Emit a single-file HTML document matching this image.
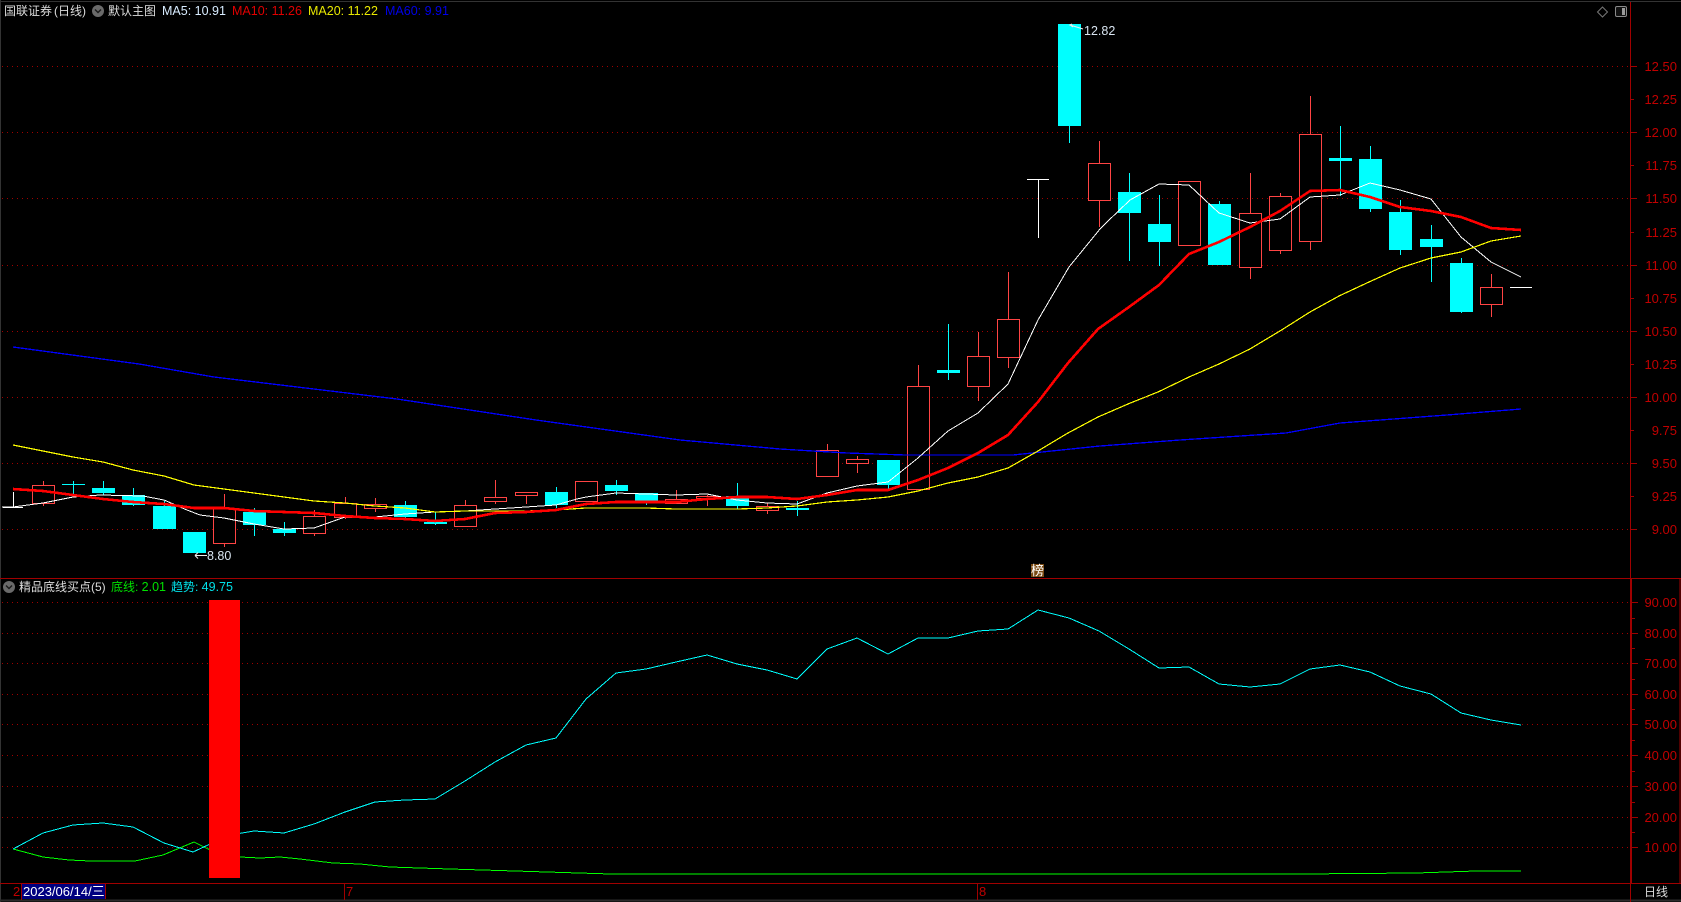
<!DOCTYPE html>
<html lang="zh">
<head>
<meta charset="utf-8">
<title>国联证券 (日线)</title>
<style>
html,body{margin:0;padding:0;background:#000;width:1681px;height:902px;overflow:hidden}
svg{display:block}
text{font-family:"Liberation Sans","Noto Sans CJK SC",sans-serif;font-size:12px}
.ax text{fill:#c00000;text-anchor:end;font-size:13px}
.n{font-size:12.5px}
.d{font-size:13px}
.l{fill:none;shape-rendering:crispEdges}
</style>
</head>
<body>
<svg width="1681" height="902" viewBox="0 0 1681 902" xmlns="http://www.w3.org/2000/svg">
<rect width="1681" height="902" fill="#000"/>
<!-- outer frame -->
<path class="l" d="M0 1.5H1681M.5 0V902" stroke="#333" stroke-width="1"/>
<path class="l" d="M0 900.5H1681" stroke="#2c2c2c" stroke-width="2"/>
<!-- grid -->
<path class="l" stroke="#a00000" stroke-dasharray="1 4" d="M2 66.5H1630M2 132.5H1630M2 198.5H1630M2 265.5H1630M2 331.5H1630M2 397.5H1630M2 463.5H1630M2 529.5H1630M2 602.5H1630M2 633.5H1630M2 663.5H1630M2 694.5H1630M2 724.5H1630M2 755.5H1630M2 786.5H1630M2 817.5H1630M2 847.5H1630"/>
<!-- frame lines -->
<path class="l" stroke="#a00000" d="M1630.5 2V902M0 578.5H1681M0 883.5H1630M1631.5 579V883M1680 579V883M1631 883.5H1681M344.5 883V900M977.5 883V900M21.5 883V900"/>
<!-- ticks -->
<path class="l" stroke="#a00000" d="M1631 66.5h6M1631 99.5h3M1631 132.5h6M1631 165.5h3M1631 198.5h6M1631 232.5h3M1631 265.5h6M1631 298.5h3M1631 331.5h6M1631 364.5h3M1631 397.5h6M1631 430.5h3M1631 463.5h6M1631 496.5h3M1631 529.5h6M1632 602.5h6M1632 633.5h6M1632 663.5h6M1632 694.5h6M1632 724.5h6M1632 755.5h6M1632 786.5h6M1632 817.5h6M1632 847.5h6M1632 618.5h3M1632 648.5h3M1632 679.5h3M1632 709.5h3M1632 740.5h3M1632 771.5h3M1632 802.5h3M1632 832.5h3"/>
<!-- wicks -->
<path class="l" stroke="#0ff" d="M73.5 481V494M103.5 481V495M133.5 488V506M164.5 501V529M254.5 508V536M284.5 522V536M405.5 501V518M435.5 512V525M556.5 487V508M616.5 480V495M646.5 493V505M737.5 483V509M797.5 501V516M888.5 460V489M948.5 324V380M1069.5 24V143M1129.5 173V261M1159.5 195V266M1219.5 201V265M1340.5 126V196M1370.5 146V212M1400.5 200V255M1431.5 225V282M1461.5 258V313"/>
<path class="l" stroke="#f44" d="M43.5 481V506M224.5 494V547M314.5 510V536M345.5 497V519M375.5 498V512M465.5 500V527M495.5 480V504M526.5 492V504M586.5 481V502M676.5 490V504M707.5 495V506M767.5 503V514M827.5 444V477M857.5 456V473M918.5 365V490M978.5 332V401M1008.5 272V368M1099.5 141V227M1189.5 181V246M1250.5 173V279M1280.5 193V254M1310.5 96V250M1491.5 274V317"/>
<!-- cyan bodies -->
<g fill="#0ff" shape-rendering="crispEdges">
<rect x="62" y="484" width="23" height="1"/>
<rect x="92" y="488" width="23" height="5"/>
<rect x="122" y="495" width="23" height="10"/>
<rect x="153" y="506" width="23" height="23"/>
<rect x="183" y="532" width="23" height="21"/>
<rect x="243" y="512" width="23" height="13"/>
<rect x="273" y="529" width="23" height="4"/>
<rect x="394" y="505" width="23" height="12"/>
<rect x="424" y="522" width="23" height="2"/>
<rect x="545" y="492" width="23" height="13"/>
<rect x="605" y="485" width="23" height="6"/>
<rect x="635" y="493" width="23" height="8"/>
<rect x="726" y="496" width="23" height="10"/>
<rect x="786" y="508" width="23" height="2"/>
<rect x="877" y="460" width="23" height="25"/>
<rect x="937" y="370" width="23" height="3"/>
<rect x="1058" y="24" width="23" height="102"/>
<rect x="1118" y="192" width="23" height="21"/>
<rect x="1148" y="224" width="23" height="18"/>
<rect x="1208" y="204" width="23" height="61"/>
<rect x="1329" y="158" width="23" height="3"/>
<rect x="1359" y="159" width="23" height="50"/>
<rect x="1389" y="212" width="23" height="38"/>
<rect x="1420" y="239" width="23" height="8"/>
<rect x="1450" y="263" width="23" height="49"/>
</g>
<!-- red bodies -->
<g fill="#000" stroke="#f44" shape-rendering="crispEdges">
<rect x="32.5" y="485.5" width="22" height="18"/>
<rect x="213.5" y="508.5" width="22" height="35"/>
<rect x="303.5" y="516.5" width="22" height="17"/>
<rect x="334.5" y="503.5" width="22" height="14"/>
<rect x="364.5" y="504.5" width="22" height="4"/>
<rect x="454.5" y="505.5" width="22" height="21"/>
<rect x="484.5" y="497.5" width="22" height="4"/>
<rect x="515.5" y="492.5" width="22" height="3"/>
<rect x="575.5" y="481.5" width="22" height="20"/>
<rect x="665.5" y="499.5" width="22" height="4"/>
<rect x="696.5" y="496.5" width="22" height="2"/>
<rect x="756.5" y="506.5" width="22" height="4"/>
<rect x="816.5" y="450.5" width="22" height="26"/>
<rect x="846.5" y="459.5" width="22" height="4"/>
<rect x="907.5" y="386.5" width="22" height="103"/>
<rect x="967.5" y="356.5" width="22" height="30"/>
<rect x="997.5" y="319.5" width="22" height="38"/>
<rect x="1088.5" y="163.5" width="22" height="37"/>
<rect x="1178.5" y="181.5" width="22" height="64"/>
<rect x="1239.5" y="213.5" width="22" height="54"/>
<rect x="1269.5" y="196.5" width="22" height="54"/>
<rect x="1299.5" y="134.5" width="22" height="107"/>
<rect x="1480.5" y="287.5" width="22" height="17"/>
</g>
<!-- white doji -->
<path class="l" stroke="#fff" d="M13.5 492V508M3 507.5H23M1027 179.5H1049M1038.5 179V238M1510 287.5H1532"/>
<!-- MA60 -->
<polyline class="l" stroke="#0000ff" stroke-width="1.3" points="13,347 139,364 214,377 397,399 536,420 680,440 780,449 813,451 847,453 905,455 1013,455 1100,446 1180,440 1286,433 1340,423 1447,415 1521,409"/>
<!-- MA5 -->
<polyline class="l" stroke="#fff" points="2,507 13,507 43,503 73,497 100,495 143,496 164,500 187,510 200,515 224,518 254,524 284,529 314,528 345,517 375,517 405,514 435,512 465,511 495,509 526,507 556,505 577,499 586,497 616,493 646,494 676,495 707,494 737,500 767,503 797,504 827,493 857,486 888,482 918,458 948,431 978,413 1008,384 1038,320 1069,267 1100,229 1107,222 1130,200 1159,184 1189,185 1219,213 1250,223 1280,219 1310,197 1340,195 1370,183 1400,190 1431,199 1461,237 1491,262 1521,277"/>
<!-- MA20 -->
<polyline class="l" stroke="#ffff00" stroke-width="1.2" points="13,445 43,451 73,457 103,462 133,470 164,476 194,485 224,489 254,493 284,497 314,501 345,503 375,506 405,508 420,510 435,512 465,511 495,511 526,511 556,510 586,508 616,508 646,508 676,509 707,509 737,509 767,508 797,506 827,502 857,500 888,497 918,491 948,483 978,477 1008,468 1038,451 1068,433 1098,417 1128,404 1158,392 1189,377 1219,364 1250,349 1280,331 1310,312 1339,296 1369,282 1400,268 1431,258 1461,252 1491,241 1521,236"/>
<!-- MA10 -->
<polyline class="l" stroke="#ff0000" stroke-width="2.6" points="13,489 43,491 73,495 103,499 133,502 164,504 194,508 224,508 254,511 284,512 314,513 345,516 375,518 405,519 435,521 465,519 495,513 526,512 556,510 586,504 616,502 646,502 676,502 707,499 737,497 767,497 797,499 827,495 857,490 888,490 918,480 948,468 978,453 1008,435 1038,402 1068,363 1098,329 1129,307 1159,285 1189,254 1219,242 1250,227 1280,211 1310,191 1340,190 1370,197 1400,207 1431,211 1461,217 1491,228 1521,230"/>
<!-- lower pane -->
<polyline class="l" stroke="#00ff00" points="13,849 43,857 69,860 90,861 135,861 163,855 194,842 208,849 224,855 240,857 260,858 280,857 300,859 333,863 360,864 390,867 450,869 515,871 611,874 800,874 1000,874 1300,874 1416,873 1476,871 1521,871"/>
<polyline class="l" stroke="#00ffff" points="13,849 43,833 73,825 103,823 133,827 164,843 193,852 208,845 224,836 254,831 284,833 314,824 345,812 375,802 405,800 435,799 465,781 495,762 526,745 556,738 586,699 616,673 646,669 676,662 707,655 737,664 767,670 797,679 827,649 857,638 888,654 918,638 948,638 978,631 1008,629 1038,610 1069,618 1099,631 1129,649 1159,668 1189,667 1219,684 1250,687 1280,684 1310,669 1340,665 1370,672 1400,686 1431,694 1461,713 1491,720 1521,725"/>
<rect x="209" y="600" width="31" height="278" fill="#f00"/>
<!-- axis labels -->
<g class="ax">
<text x="1677" y="71">12.50</text><text x="1677" y="104">12.25</text><text x="1677" y="137">12.00</text><text x="1677" y="170">11.75</text><text x="1677" y="203">11.50</text><text x="1677" y="237">11.25</text><text x="1677" y="270">11.00</text><text x="1677" y="303">10.75</text><text x="1677" y="336">10.50</text><text x="1677" y="369">10.25</text><text x="1677" y="402">10.00</text><text x="1677" y="435">9.75</text><text x="1677" y="468">9.50</text><text x="1677" y="501">9.25</text><text x="1677" y="534">9.00</text>
<text x="1677" y="607">90.00</text><text x="1677" y="638">80.00</text><text x="1677" y="668">70.00</text><text x="1677" y="699">60.00</text><text x="1677" y="729">50.00</text><text x="1677" y="760">40.00</text><text x="1677" y="791">30.00</text><text x="1677" y="822">20.00</text><text x="1677" y="852">10.00</text>
</g>
<!-- header -->
<text x="4" y="15" fill="#dcdcdc">国联证券</text>
<text x="54" y="15" fill="#dcdcdc">(日线)</text>
<circle cx="98" cy="11" r="6" fill="#6a6a6a"/>
<path d="M95 9.5l3 3 3-3" fill="none" stroke="#1a1a1a" stroke-width="1.4"/>
<text x="108" y="15" fill="#dcdcdc">默认主图</text>
<text class="n" x="162" y="15" fill="#d8ecff">MA5: 10.91</text>
<text class="n" x="232" y="15" fill="#e00000">MA10: 11.26</text>
<text class="n" x="308" y="15" fill="#e8e800">MA20: 11.22</text>
<text class="n" x="385" y="15" fill="#0000e8">MA60: 9.91</text>
<!-- top-right icons -->
<path d="M1602.5 7l5 5-5 5-5-5z" fill="none" stroke="#777"/>
<rect x="1615.5" y="6.5" width="11" height="10" rx="1.5" fill="#111" stroke="#8a8a8a"/>
<rect x="1622" y="8" width="3" height="7" fill="#9a9a9a"/>
<!-- annotations -->
<path d="M1083 29L1070 25l2-1M1070 25l3 2" fill="none" stroke="#eee"/>
<text class="n" x="1084" y="35" fill="#d8e4f0">12.82</text>
<path d="M207 555.5H195M195 555.5l3-3M195 555.5l3 3" fill="none" stroke="#eee"/>
<text class="n" x="207" y="560" fill="#d8e4f0">8.80</text>
<rect x="1031" y="564" width="13" height="13" fill="#7a4a12"/>
<text x="1031" y="575" fill="#fff" style="font-size:13px">榜</text>
<!-- lower pane header -->
<circle cx="9" cy="587" r="6" fill="#6a6a6a"/>
<path d="M6 585.5l3 3 3-3" fill="none" stroke="#1a1a1a" stroke-width="1.4"/>
<text x="19" y="591" fill="#dcdcdc">精品底线买点(5)</text>
<text x="111" y="591" fill="#00e000">底线: <tspan class="n">2.01</tspan></text>
<text x="171" y="591" fill="#00e0e8">趋势: <tspan class="n">49.75</tspan></text>
<!-- date bar -->
<text class="d" x="13" y="896" fill="#c00000">2</text>
<rect x="21" y="884" width="85" height="15" fill="#000080"/>
<path class="l" d="M21.5 883V899M105.5 883V899" stroke="#a00000"/>
<text class="d" x="23" y="896" fill="#fff">2023/06/14/三</text>
<text class="d" x="346" y="896" fill="#c00000">7</text>
<text class="d" x="979" y="896" fill="#c00000">8</text>
<text x="1644" y="896" fill="#dcdcdc">日线</text>
</svg>
</body>
</html>
